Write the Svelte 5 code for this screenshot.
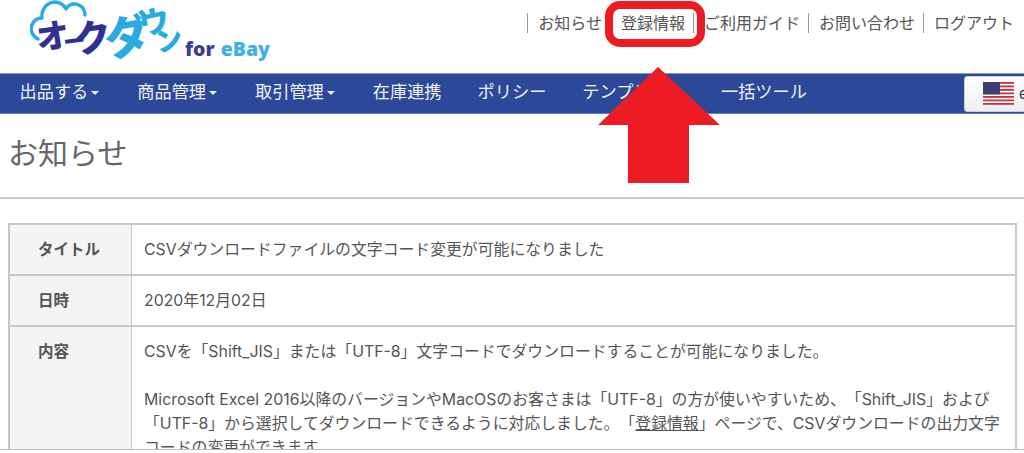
<script lang="ts">
  const topLinks = ['お知らせ', '登録情報', 'ご利用ガイド', 'お問い合わせ', 'ログアウト'];
  const menu = [
    { label: '出品する', caret: true },
    { label: '商品管理', caret: true },
    { label: '取引管理', caret: true },
    { label: '在庫連携', caret: false },
    { label: 'ポリシー', caret: false },
    { label: 'テンプレート', caret: false },
    { label: '一括ツール', caret: false }
  ];
  const stripes = [0, 1, 2, 3, 4, 5, 6];
</script>

<div class="page">
  <header class="top">
    <a class="logo" href="#top" aria-label="オークダウン for eBay">
      <svg class="cloud" width="90" height="50" viewBox="0 0 90 50" fill="none" stroke="#29abe2" stroke-width="3.4" stroke-linecap="round" stroke-linejoin="round">
        <path d="M8 39C2 36 0 30 2 25 4 20 8 18 12 18 11 10 16 3 24 2 30 2 34 5 36 9 39 4 44 3 49 5 53 7 55 10 55 15"/>
      </svg>
      <span class="kana navy k1">オ</span>
      <span class="kana navy k2">ー</span>
      <span class="kana navy k3">ク</span>
      <span class="kana sky k4">ダ</span>
      <span class="kana sky k5">ウ</span>
      <span class="kana sky k6">ン</span>
      <span class="brand"><b>for</b> <i>eBay</i></span>
    </a>
    <ul class="links">
      {#each topLinks as link}
        <li><a href="#top">{link}</a></li>
      {/each}
    </ul>
  </header>

  <nav class="menu">
    {#each menu as item}
      <a href="#top" class="menu-item">{item.label}{#if item.caret}<span class="caret"></span>{/if}</a>
    {/each}
    <button class="market">
      <svg width="31" height="23" viewBox="0 0 31 23">
        <rect width="31" height="23" fill="#fff"/>
        {#each stripes as s}
          <rect y={s * 3.5} width="31" height="1.8" fill="#c8313e"/>
        {/each}
        <rect width="17" height="12.4" fill="#3c3f70"/>
      </svg>
      <span>eBay</span>
    </button>
  </nav>

  <main>
    <h1>お知らせ</h1>
    <table>
      <tbody>
        <tr>
          <th>タイトル</th>
          <td>CSVダウンロードファイルの文字コード変更が可能になりました</td>
        </tr>
        <tr>
          <th>日時</th>
          <td>2020年12月02日</td>
        </tr>
        <tr>
          <th>内容</th>
          <td>
            CSVを「Shift_JIS」または「UTF-8」文字コードでダウンロードすることが可能になりました。<br /><br />
            Microsoft Excel 2016以降のバージョンやMacOSのお客さまは「UTF-8」の方が使いやすいため、「Shift_JIS」および<br />
            「UTF-8」から選択してダウンロードできるように対応しました。「<a href="#top">登録情報</a>」ページで、CSVダウンロードの出力文字<br />
            コードの変更ができます。
          </td>
        </tr>
      </tbody>
    </table>
  </main>

  <!-- annotation drawn over the screenshot -->
  <div class="highlight"></div>
  <svg class="arrow" width="122" height="117" viewBox="0 0 122 117">
    <path d="M60 0 122 58H91V116H30V58H0Z" fill="#ed1c24"/>
  </svg>
</div>

<style>
  :global(body) {
    margin: 0;
    overflow: hidden;
    background: #fff;
  }

  .page {
    position: relative;
    width: 1024px;
    height: 449px;
    overflow: hidden;
    border-bottom: 1px solid #bbb;
    font-family: Inter, "Noto Sans CJK JP", sans-serif;
    color: #555;
    text-spacing-trim: space-all;
  }

  a {
    color: inherit;
    text-decoration: none;
  }

  .top {
    display: flex;
    justify-content: flex-end;
    height: 73px;
  }

  .logo {
    position: absolute;
    left: 0;
    top: 0;
    width: 290px;
    height: 73px;
  }

  .cloud {
    position: absolute;
    left: 30px;
    top: 0;
  }

  .kana {
    position: absolute;
    font-family: "Noto Sans CJK JP", sans-serif;
    font-weight: 900;
    line-height: 1;
  }

  .navy {
    color: #2e3192;
  }

  .sky {
    color: #29abe2;
  }

  .k1 { left: 36px; top: 18px; font-size: 33px; transform: rotate(-8deg); }
  .k2 { left: 63px; top: 28px; font-size: 22px; transform: rotate(-8deg); }
  .k3 { left: 74px; top: 17px; font-size: 37px; transform: rotate(-8deg); }
  .k4 { left: 104px; top: 10px; font-size: 46px; transform: rotate(-10deg); }
  .k5 { left: 139px; top: 5px; font-size: 30px; transform: rotate(-12deg); }
  .k6 { left: 155px; top: 25px; font-size: 27px; transform: rotate(-12deg); }

  .brand {
    position: absolute;
    left: 185px;
    top: 37px;
    font-family: "Open Sans", sans-serif;
    font-size: 19.5px;
    font-weight: 800;
    line-height: 24px;
    white-space: nowrap;
  }

  .brand b {
    color: #3b3f8c;
    font-weight: 800;
  }

  .brand i {
    margin-left: 1px;
    color: #3fb0e6;
    font-style: normal;
  }

  .links {
    display: flex;
    margin: 13px 2px 0 0;
    padding: 0;
    list-style: none;
    height: 20px;
  }

  .links li {
    padding: 0 8px 0 10px;
    border-left: 1px solid #999;
    font-size: 16px;
    line-height: 20px;
    white-space: nowrap;
    color: #555;
  }

  .menu {
    display: flex;
    align-items: center;
    box-sizing: border-box;
    height: 41px;
    padding: 0 0 6px 1.5px;
    background: #2c4899;
    border-top: 1px solid #7d97d8;
    border-bottom: 1px solid #5f7dca;
  }

  .menu-item {
    padding: 0 18px;
    color: #f0f3fa;
    font-size: 17.2px;
    white-space: nowrap;
  }

  .caret {
    display: inline-block;
    margin: 0 2px 0 3px;
    vertical-align: 3px;
    border-top: 4px solid #f0f3fa;
    border-left: 4px solid transparent;
    border-right: 4px solid transparent;
  }

  .market {
    display: flex;
    align-items: center;
    gap: 5px;
    flex-shrink: 0;
    margin: 6px -60px 0 auto;
    width: 120px;
    height: 36px;
    padding: 0 0 0 18px;
    background: linear-gradient(#fff, #eee);
    border: 1px solid #ccc;
    border-radius: 3px;
    font-family: inherit;
    font-size: 15px;
    color: #333;
  }

  h1 {
    margin: 0;
    padding: 18px 8px 22px;
    font-size: 30px;
    font-weight: 400;
    line-height: 43px;
    color: #666;
    border-bottom: 2px solid #ccc;
  }

  table {
    table-layout: fixed;
    width: 1009px;
    margin: 24px 0 0 8px;
    border-collapse: collapse;
    border: 2px solid #c8c8c8;
    font-size: 15.85px;
  }

  th,
  td {
    border: 1px solid #c8c8c8;
    border-width: 2px 1px;
    padding: 12.5px 12px;
    line-height: 24px;
    vertical-align: top;
    text-align: left;
  }

  th {
    width: 93px;
    padding-left: 28px;
    padding-right: 0;
    background: #f4f4f4;
    font-size: 15.5px;
    font-weight: 700;
  }

  td {
    white-space: nowrap;
  }

  td a {
    text-decoration: underline;
  }

  .highlight {
    position: absolute;
    left: 605px;
    top: 1px;
    width: 100px;
    height: 46px;
    box-sizing: border-box;
    border: 8px solid #ed1c24;
    border-radius: 15px;
  }

  .arrow {
    position: absolute;
    left: 598px;
    top: 67px;
  }
</style>
